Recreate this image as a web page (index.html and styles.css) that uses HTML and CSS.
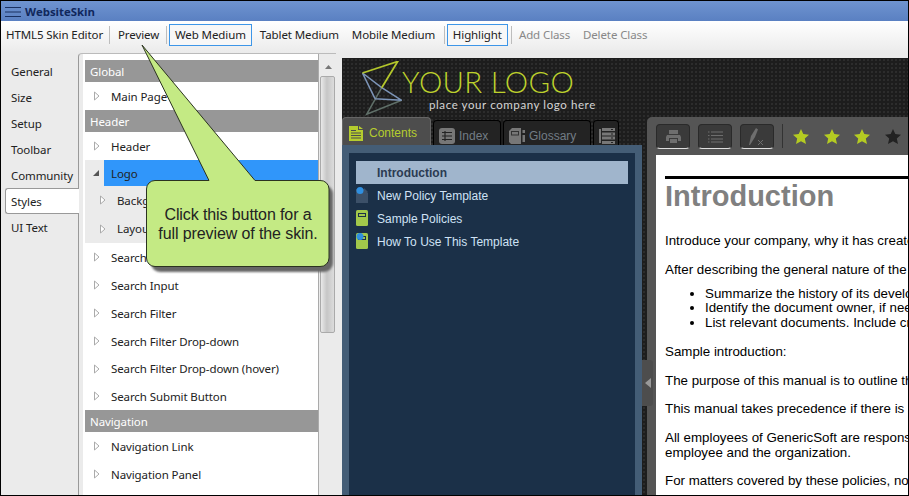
FILE: index.html
```html
<!DOCTYPE html>
<html lang="en">
<head>
<meta charset="utf-8">
<title>WebsiteSkin</title>
<link rel="stylesheet" href="styles.css">
</head>
<body>
<div class="window">
  <header class="titlebar">
    <svg class="menu-icon" width="16" height="14" viewBox="0 0 16 14"><path d="M0 3.500H16M0 8H16M0 12.500H16" stroke="#1a3060" stroke-width="1"/></svg>
    <span class="title">WebsiteSkin</span>
  </header>
  <nav class="toolbar">
    <span class="tool t-first">HTML5 Skin Editor</span>
    <span class="sep"></span>
    <span class="tool t-preview">Preview</span>
    <span class="sep"></span>
    <span class="tool boxed">Web Medium</span>
    <span class="tool t-tablet">Tablet Medium</span>
    <span class="tool t-mobile">Mobile Medium</span>
    <span class="sep"></span>
    <span class="tool boxed">Highlight</span>
    <span class="sep"></span>
    <span class="tool disabled t-add">Add Class</span>
    <span class="tool disabled t-del">Delete Class</span>
  </nav>
  <main class="main">
    <aside class="tabs">
      <div class="tab">General</div>
      <div class="tab">Size</div>
      <div class="tab">Setup</div>
      <div class="tab">Toolbar</div>
      <div class="tab">Community</div>
      <div class="tab active">Styles</div>
      <div class="tab">UI Text</div>
    </aside>
    <section class="tree-panel">
      <div class="tree">
        <div class="group">Global</div>
        <div class="row"><svg class="tri" width="6" height="10" viewBox="0 0 6 10"><path d="M.5 1 5 5 .5 9Z"/></svg>Main Page</div>
        <div class="group">Header</div>
        <div class="row"><svg class="tri" width="6" height="10" viewBox="0 0 6 10"><path d="M.5 1 5 5 .5 9Z"/></svg>Header</div>
        <div class="row open"><svg class="tri-open" width="7" height="10" viewBox="0 0 7 10"><path d="M6 2V8H0Z"/></svg><span class="sel">Logo</span></div>
        <div class="row child"><svg class="tri" width="6" height="10" viewBox="0 0 6 10"><path d="M.5 1 5 5 .5 9Z"/></svg>Background</div>
        <div class="row child last"><svg class="tri" width="6" height="10" viewBox="0 0 6 10"><path d="M.5 1 5 5 .5 9Z"/></svg>Layout</div>
        <div class="row"><svg class="tri" width="6" height="10" viewBox="0 0 6 10"><path d="M.5 1 5 5 .5 9Z"/></svg>Search</div>
        <div class="row"><svg class="tri" width="6" height="10" viewBox="0 0 6 10"><path d="M.5 1 5 5 .5 9Z"/></svg>Search Input</div>
        <div class="row"><svg class="tri" width="6" height="10" viewBox="0 0 6 10"><path d="M.5 1 5 5 .5 9Z"/></svg>Search Filter</div>
        <div class="row"><svg class="tri" width="6" height="10" viewBox="0 0 6 10"><path d="M.5 1 5 5 .5 9Z"/></svg>Search Filter Drop-down</div>
        <div class="row short"><svg class="tri" width="6" height="10" viewBox="0 0 6 10"><path d="M.5 1 5 5 .5 9Z"/></svg>Search Filter Drop-down (hover)</div>
        <div class="row"><svg class="tri" width="6" height="10" viewBox="0 0 6 10"><path d="M.5 1 5 5 .5 9Z"/></svg>Search Submit Button</div>
        <div class="group">Navigation</div>
        <div class="row"><svg class="tri" width="6" height="10" viewBox="0 0 6 10"><path d="M.5 1 5 5 .5 9Z"/></svg>Navigation Link</div>
        <div class="row"><svg class="tri" width="6" height="10" viewBox="0 0 6 10"><path d="M.5 1 5 5 .5 9Z"/></svg>Navigation Panel</div>
      </div>
      <div class="scrollbar">
        <svg class="scroll-up" width="7" height="4" viewBox="0 0 7 4"><path d="M3.500 0 7 4H0Z" fill="#777"/></svg>
        <div class="thumb"></div>
      </div>
    </section>
    <section class="preview">
      <div class="brand">
        <svg class="logo-mark" width="42" height="56" viewBox="0 0 42 56">
          <g fill="none" stroke-width="1.500">
            <path d="M19.700 26.700 4.700 53.300 39.700 39.300" stroke="#5f6f68"/>
            <path d="M13 37.700 39.700 39.300 19.700 26.700 .5 12 13 37.700" stroke="#7d95b8"/>
            <path d="M19.700 26.700 35.700 .5 .5 12" stroke="#b3c62b" stroke-width="1.800"/>
          </g>
        </svg>
        <div class="brand-text">
          <div class="logo-word">YOUR LOGO</div>
          <div class="logo-sub">place your company logo here</div>
        </div>
      </div>
      <div class="workspace">
        <div class="nav-col">
          <div class="nav-tabs">
            <div class="nav-tab current">
              <svg width="14" height="15" viewBox="0 0 14 15"><path d="M0 0H9V4H14V15H0Z" fill="#b5cc2e"/><path d="M10 0 14 3H10Z" fill="#b5cc2e"/><path d="M2 4.500H7M2 7H12M2 9.500H12M2 12H12" stroke="#4d4d4d"/></svg>
              <span>Contents</span>
            </div>
            <div class="nav-tab t-index">
              <svg width="16" height="16" viewBox="0 0 16 16"><rect width="16" height="16" rx="3" fill="#777"/><path d="M3 4.500H13M3 8H13M3 11.500H13M6 3V13" stroke="#232323" stroke-width="1.200"/></svg>
              <span>Index</span>
            </div>
            <div class="nav-tab t-gloss">
              <svg width="16" height="16" viewBox="0 0 16 16"><path d="M0 3 3 0H12V16H2L0 14Z" fill="#777"/><rect x="2.500" y="3.500" width="7" height="3.500" fill="none" stroke="#333"/><rect x="13.500" y="2" width="2.500" height="3" fill="#777"/><rect x="13.500" y="7" width="2.500" height="7" fill="#777"/></svg>
              <span>Glossary</span>
            </div>
            <div class="nav-tab t-more">
              <svg width="16" height="16" viewBox="0 0 16 16"><path d="M3 0H16V3H3ZM3 4.500H16V7.500H3ZM3 8.500H16V11.500H3ZM3 13H16V16H3ZM0 1H2V15H0Z" fill="#777"/><path d="M12 1.500H14M12 6H14M12 10H14M12 14.500H14" stroke="#232323"/></svg>
            </div>
          </div>
          <div class="nav-panel">
            <div class="nav-inner">
              <div class="toc highlighted">Introduction</div>
              <div class="toc">
                <svg class="toc-icon" width="12" height="16" viewBox="0 0 12 16"><path d="M0 2H8L12 6V16H0Z" fill="#3c5068"/><path d="M8 1 12 5H8Z" fill="#3c5068"/><circle cx="4" cy="3.500" r="3.500" fill="#2f8fe0"/></svg>
                New Policy Template
              </div>
              <div class="toc">
                <svg class="toc-icon" width="12" height="16" viewBox="0 0 12 16"><rect width="12" height="16" rx="1.500" fill="#a2c84b"/><rect x="2.500" y="3.500" width="7" height="3" fill="none" stroke="#1b3048"/></svg>
                Sample Policies
              </div>
              <div class="toc">
                <svg class="toc-icon" width="12" height="16" viewBox="0 0 12 16"><rect width="12" height="16" rx="1.500" fill="#a2c84b"/><rect x="2.500" y="3.500" width="7" height="3" fill="none" stroke="#1b3048"/><circle cx="4" cy="3.500" r="3.500" fill="#2f8fe0"/></svg>
                How To Use This Template
              </div>
            </div>
          </div>
        </div>
        <article class="content-panel">
          <div class="doc-tools">
            <span class="doc-btn"><svg width="15" height="14" viewBox="0 0 15 14"><path d="M3 0H12V4H3ZM1 5H14L15 7V11H12V8H3V11H0V7ZM4 9H11V13H4Z" fill="#6e6e6e"/></svg></span>
            <span class="doc-btn"><svg width="15" height="12" viewBox="0 0 15 12"><path d="M3 1H15M3 4.500H15M3 8H15M3 11H15M0 1H1.500M0 4.500H1.500M0 8H1.500M0 11H1.500" stroke="#6e6e6e" stroke-width="1.200"/></svg></span>
            <span class="doc-btn"><svg width="16" height="17" viewBox="0 0 16 17"><path d="M0 17 2 8 7 0 9 1.500 6 9 1 17Z" fill="#6e6e6e"/><path d="M9 12 14 17M14 12 9 17" stroke="#6e6e6e"/></svg></span>
            <span class="doc-sep"></span>
            <svg class="star" width="16" height="15" viewBox="0 0 16 15"><path d="M8 0 10.300 5 16 5.700 11.800 9.400 13 15 8 12.200 3 15 4.200 9.400 0 5.700 5.700 5Z" fill="#b4cb22"/></svg>
            <svg class="star" width="16" height="15" viewBox="0 0 16 15"><path d="M8 0 10.300 5 16 5.700 11.800 9.400 13 15 8 12.200 3 15 4.200 9.400 0 5.700 5.700 5Z" fill="#b4cb22"/></svg>
            <svg class="star" width="16" height="15" viewBox="0 0 16 15"><path d="M8 0 10.300 5 16 5.700 11.800 9.400 13 15 8 12.200 3 15 4.200 9.400 0 5.700 5.700 5Z" fill="#b4cb22"/></svg>
            <svg class="star" width="16" height="15" viewBox="0 0 16 15"><path d="M8 0 10.300 5 16 5.700 11.800 9.400 13 15 8 12.200 3 15 4.200 9.400 0 5.700 5.700 5Z" fill="#222"/></svg>
          </div>
          <div class="page">
            <h1>Introduction</h1>
            <p>Introduce your company, why it has created this manual</p>
            <p>After describing the general nature of the company</p>
            <ul>
              <li>Summarize the history of its development</li>
              <li>Identify the document owner, if needed</li>
              <li>List relevant documents. Include cross references</li>
            </ul>
            <p>Sample introduction:</p>
            <p>The purpose of this manual is to outline the policies</p>
            <p>This manual takes precedence if there is a conflict</p>
            <p>All employees of GenericSoft are responsible for<br>employee and the organization.</p>
            <p>For matters covered by these policies, no other</p>
          </div>
        </article>
        <div class="handle"><svg width="6" height="10" viewBox="0 0 6 10"><path d="M6 0V10L0 5Z" fill="#999"/></svg></div>
      </div>
    </section>
  </main>
  <div class="callout">
    <svg class="callout-shape" width="909" height="496" viewBox="0 0 909 496">
      <defs><filter id="soft" x="-10%" y="-10%" width="120%" height="120%"><feGaussianBlur stdDeviation="1"/></filter></defs>
      <rect x="151" y="185" width="182" height="87" rx="9" fill="#666" filter="url(#soft)"/>
      <path d="M155 180.500H209L142 45 255 180.500H320A8.500 8.500 0 0 1 329 189V258A8.500 8.500 0 0 1 320 266.500H155A8.500 8.500 0 0 1 146.500 258V189A8.500 8.500 0 0 1 155 180.500Z" fill="#c4ea84" stroke="#2b3320" stroke-width="1"/>
    </svg>
    <div class="callout-text">Click this button for a<br>full preview of the skin.</div>
  </div>
</div>
</body>
</html>
```
FILE: styles.css
```css
* { box-sizing: border-box; }
html, body { margin: 0; padding: 0; }
body { width: 909px; height: 496px; overflow: hidden; }
.window {
  position: relative;
  width: 909px;
  height: 496px;
  border: 1px solid #000;
  background: #ebebeb;
  overflow: hidden;
  display: flex;
  flex-direction: column;
  font: 11.500px "Noto Sans", sans-serif;
  letter-spacing: -.1px;
  color: #222;
}
.titlebar {
  height: 20px;
  flex: none;
  display: flex;
  align-items: center;
  background: linear-gradient(#6f94d0, #5a80c2);
  padding-left: 4px;
}
.menu-icon { flex: none; }
.title { margin-left: 4px; font: bold 11.400px "Open Sans", sans-serif; letter-spacing: 0; color: #10275c; }
.toolbar {
  height: 32px;
  flex: none;
  display: flex;
  align-items: center;
  padding: 0 0 5px 5px;
  background: linear-gradient(#fff, #ebebeb);
  white-space: nowrap;
}
.tool { display: block; }
.sep { width: 1px; height: 18px; background: #bdbdbd; flex: none; }
.t-first { width: 103px; }
.t-preview { width: 56px; padding-left: 8px; }
.t-tablet { margin-left: 8px; width: 92px; }
.t-mobile { width: 92px; }
.boxed { border: 1px solid #3d96e8; background: #f7f7f7; height: 22px; line-height: 19px; padding: 0 5px; margin-left: 2px; }
.boxed + .sep { margin-left: 3px; }
.disabled { color: #888; }
.t-add { margin-left: 7px; width: 64px; }
.t-del { width: 70px; }
.main { flex: 1; min-height: 0; display: flex; }
.tabs { width: 77px; flex: none; padding: 6px 0 0 4px; }
.tab { height: 26px; line-height: 26px; padding-left: 6px; position: relative; }
.tab.active {
  margin: -1px -1px 1px 0;
  background: #fff;
  border: 1px solid #999;
  border-right: 0;
  border-radius: 3px 0 0 3px;
  padding-left: 5px;
  line-height: 26px;
  z-index: 1;
}
.tree-panel {
  width: 258px;
  flex: none;
  display: flex;
  border-left: 1px solid #999;
  border-top: 1px solid #bbb;
  border-top-left-radius: 4px;
  padding-left: 4px;
}
.tree { width: 236px; flex: none; background: #fff; padding: 6px 0 0 2px; border-right: 1px solid #aaa; overflow: hidden; white-space: nowrap; }
.group { height: 22px; width: 233px; line-height: 23px; background: #979797; color: #fff; padding-left: 5px; }
.row { height: 28px; display: flex; align-items: center; padding-left: 9px; }
.row.short { height: 27px; }
.tri { flex: none; margin-right: 11px; fill: #fff; stroke: #aaa; stroke-width: 1; }
.tri-open { flex: none; margin-right: 7px; fill: #555; }
.row.open { height: 26px; width: 233px; background: #ebebeb; padding-left: 8px; align-items: stretch; }
.row.open svg { align-self: center; margin-right: 4px; }
.sel { flex: 1; background: #3096fa; display: flex; align-items: center; padding-left: 7px; }
.row.child { width: 233px; background: #ebebeb; padding-left: 15px; }
.row.child.last { height: 29px; }
.scrollbar { width: 16px; flex: none; margin-left: 1px; padding-top: 11px; }
.scroll-up { display: block; margin: 0 auto 7px; }
.thumb {
  width: 15px;
  height: 257px;
  border: 1px solid #aaa;
  border-radius: 2px;
  background: linear-gradient(90deg, #e9e9e9, #c6c6c6 45%, #dcdcdc);
}
.preview {
  flex: 1;
  min-width: 0;
  margin: 5px 0 0 6px;
  display: flex;
  flex-direction: column;
  letter-spacing: 0;
  background-color: #1d1d1d;
  background-image: radial-gradient(#2e2e2e 0.7px, transparent 0.8px);
  background-size: 4px 4px;
}
.brand { height: 59px; flex: none; display: flex; padding: 3px 0 0 20px; color: #b3c62b; }
.logo-mark { flex: none; }
.brand-text { margin-left: -2px; }
.logo-word { font: 300 29.500px/30px "Lato", sans-serif; color: #bdd12c; margin-top: 6px; letter-spacing: .3px; }
.logo-sub { font: 11.500px/14px "Lato", sans-serif; color: #d4d4d4; margin: 1px 0 0 27px; letter-spacing: .6px; }
.workspace { flex: 1; min-height: 0; display: flex; position: relative; }
.nav-col { width: 300px; flex: none; display: flex; flex-direction: column; }
.nav-tabs { height: 28px; flex: none; display: flex; align-items: flex-end; gap: 2px; font-family: "Liberation Sans", sans-serif; }
.nav-tab {
  height: 25px;
  background: #232323;
  border: 1px solid #000;
  border-bottom: 0;
  border-radius: 4px 4px 0 0;
  display: flex;
  align-items: center;
  gap: 4px;
  color: #727c85;
  padding: 6px 0 0 5px;
  font-size: 12px;
}
.nav-tab.current { height: 28px; width: 89px; gap: 6px; background: #4d4d4d; border-color: #666; color: #b5cc2e; padding: 3px 0 0 6px; }
.t-index { width: 68px; }
.t-gloss { width: 88px; }
.t-more { width: 26px; }
.nav-panel { flex: 1; min-height: 0; background: #445d76; padding: 8px 7px 0; }
.nav-inner { height: 100%; background: #1b3048; padding: 8px 7px 0; font: 12px "Liberation Sans", sans-serif; color: #cfe2f5; }
.toc { height: 23px; display: flex; align-items: center; padding-left: 21px; position: relative; }
.toc.highlighted { background: #a0b5cc; color: #2b3b52; font-weight: bold; }
.toc-icon { position: absolute; left: 0; top: 3px; }
.content-panel {
  margin-left: 5px;
  flex: 1;
  min-width: 0;
  background: #555;
  border-radius: 5px 0 0 0;
  padding: 7px 0 0 9px;
  display: flex;
  flex-direction: column;
  overflow: hidden;
}
.doc-tools { height: 31px; flex: none; display: flex; align-items: flex-start; }
.doc-btn {
  width: 34px;
  height: 25px;
  margin-right: 8px;
  background: #3a3a3a;
  border: 1px solid #2a2a2a;
  border-bottom-color: #ddd;
  border-radius: 4px;
  display: flex;
  align-items: center;
  justify-content: center;
  flex: none;
}
.doc-sep { width: 1px; height: 24px; background: #333; margin-right: 10px; flex: none; }
.star { flex: none; margin: 5px 14.700px 0 0; }
.page {
  flex: 1;
  min-height: 0;
  background: #fff;
  padding: 21px 0 0 9px;
  overflow: hidden;
  white-space: nowrap;
  font: 13.330px/15px "Liberation Sans", sans-serif;
  color: #000;
}
.page h1 {
  margin: 0 0 19px;
  border-top: 3px solid #000;
  font: bold 29px/35px "Liberation Sans", sans-serif;
  color: #808080;
}
.page p { margin: 0 0 13.500px; }
.page ul { margin: -3.500px 0 14px; padding-left: 40px; line-height: 14.500px; }
.handle {
  position: absolute;
  left: 300px;
  top: 243px;
  width: 11px;
  height: 46px;
  background: #4d4d4d;
  border-radius: 0 3px 3px 0;
  display: flex;
  align-items: center;
  justify-content: center;
}
.callout { position: absolute; left: -1px; top: -1px; width: 909px; height: 496px; pointer-events: none; }
.callout-shape { display: block; }
.callout-text {
  position: absolute;
  left: 147px;
  top: 206px;
  width: 182px;
  text-align: center;
  font: 16px/18.500px "Liberation Sans", sans-serif;
  color: #222;
}
```
